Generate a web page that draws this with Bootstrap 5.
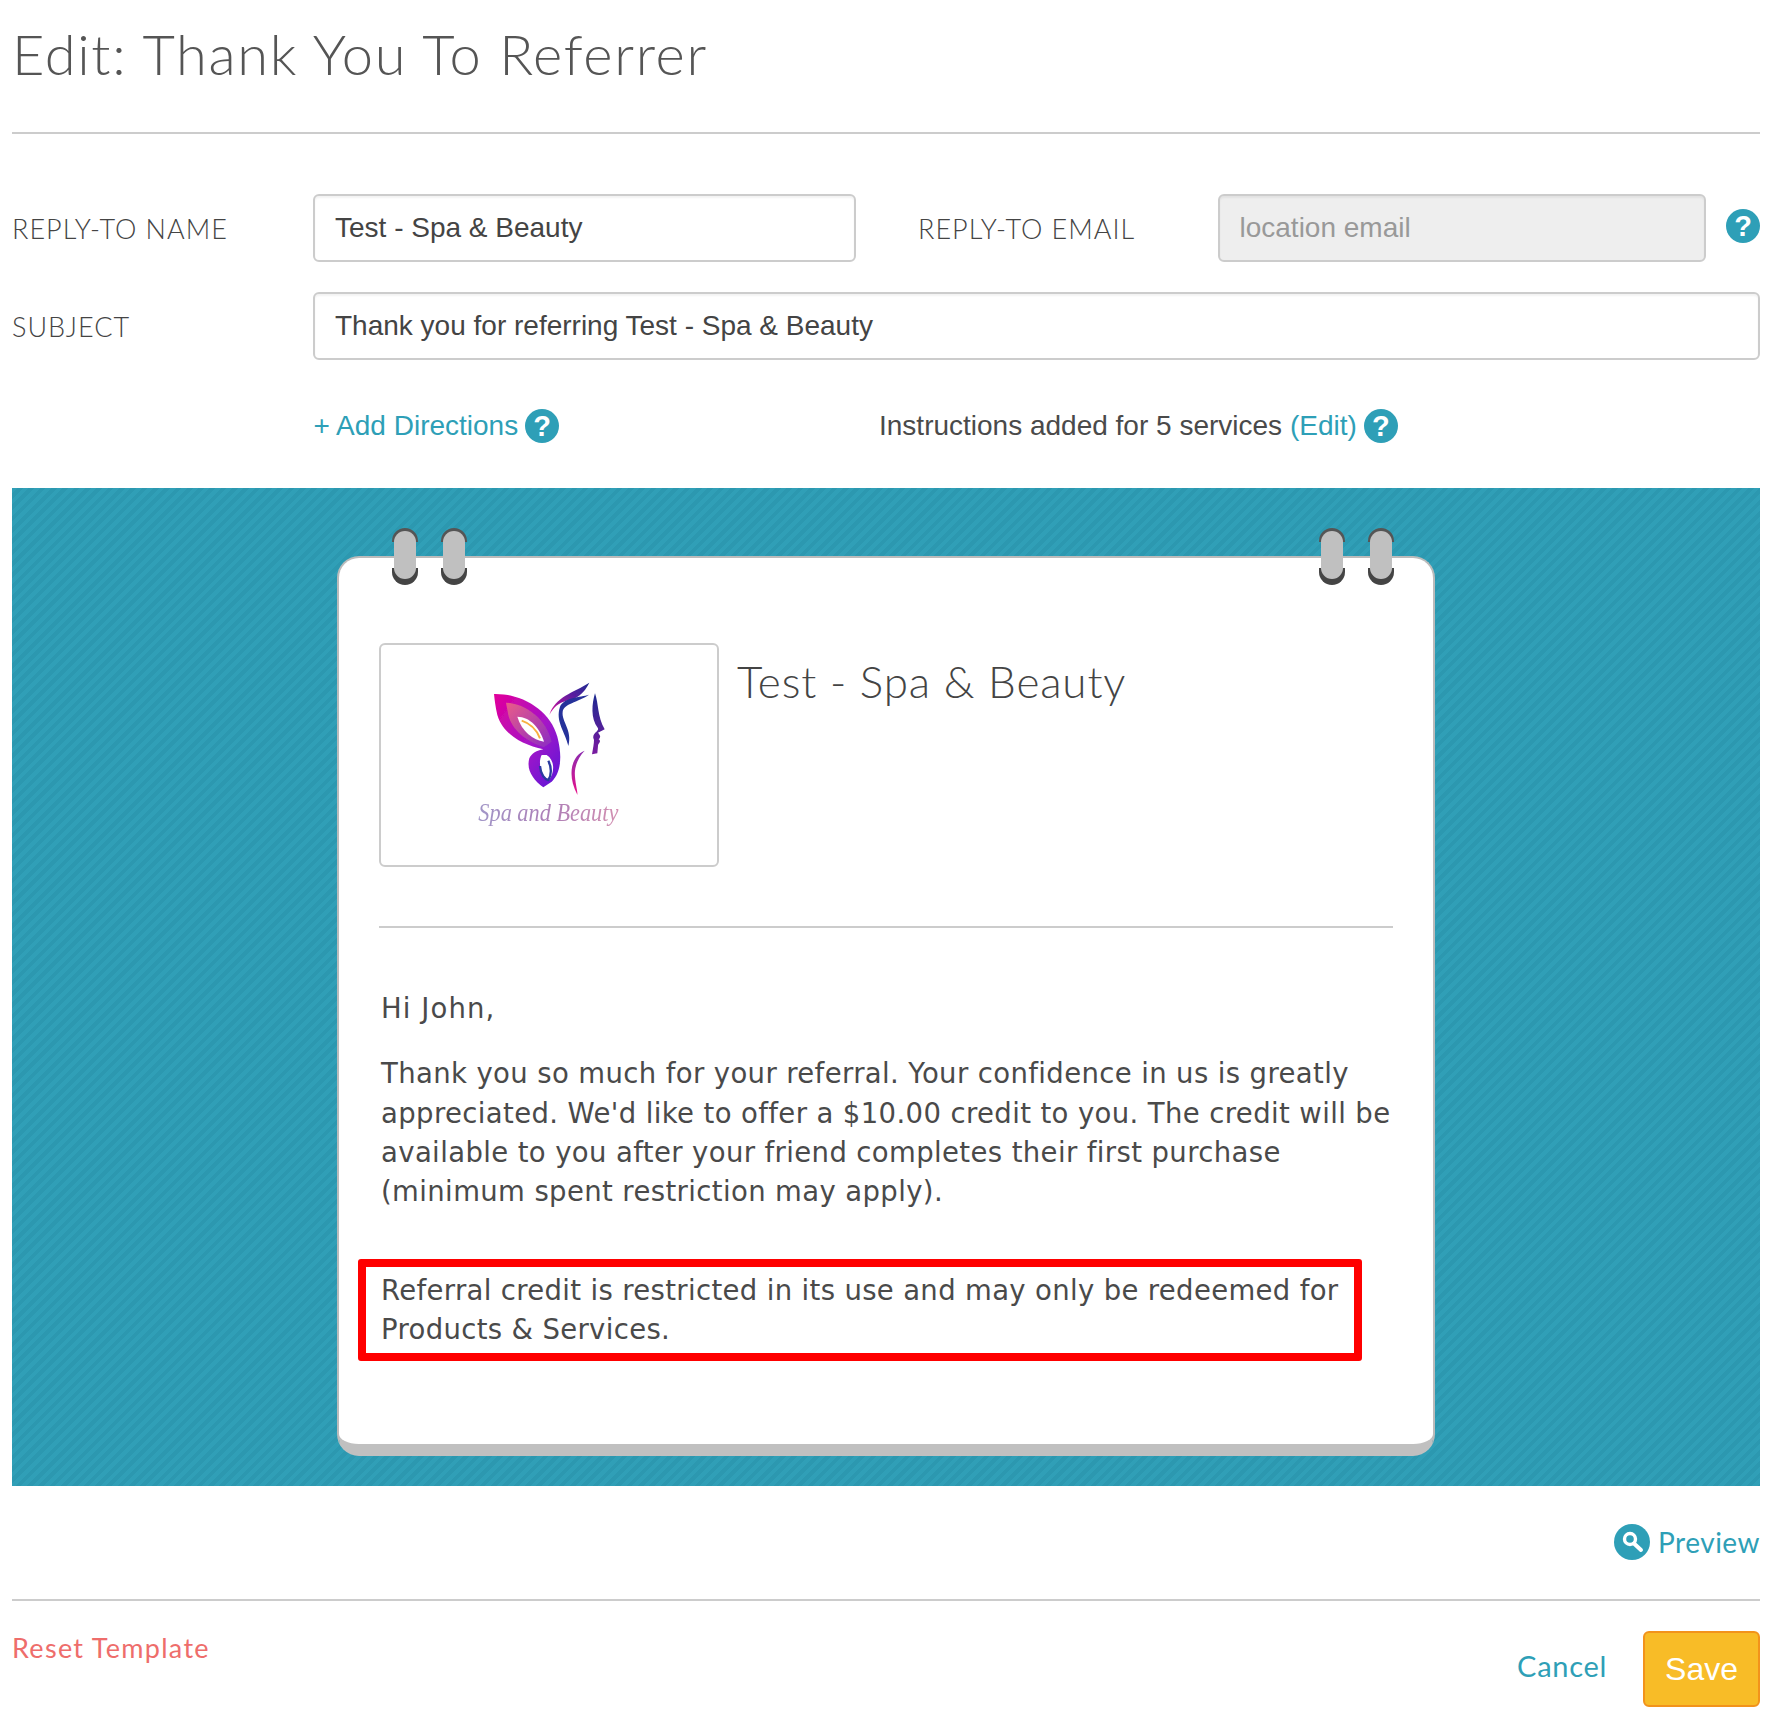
<!doctype html>
<html lang="en">
<head>
<meta charset="utf-8">
<title>Edit: Thank You To Referrer</title>
<link href="https://cdn.jsdelivr.net/npm/bootstrap@5.3.0/dist/css/bootstrap.min.css" rel="stylesheet">
<style>
body{background:#fff;color:#4a4a4a;font-family:"Liberation Sans",Arial,sans-serif;padding:0 16px 0 12px;height:1716px;overflow:hidden}
.page-title{font-family:Lato,sans-serif;font-weight:300;font-size:56px;line-height:68px;letter-spacing:1.65px;color:#555;margin:0;padding-top:20px;height:132px}
.rule-line{border:0;border-top:2px solid #ccc;opacity:1;margin:0}
.field-label{font-family:Lato,sans-serif;font-weight:300;font-size:27px;line-height:34px;letter-spacing:1px;color:#444;text-transform:uppercase;padding-top:1.5px}
.label-main{width:301px;flex:none}
.label-second{width:299.5px;flex:none;margin-left:62px}
.form-control.field-input{height:68px;border:2px solid #ccc;border-radius:6px;font-size:28px;color:#444;padding:0 20px;box-shadow:inset 0 2px 2px rgba(0,0,0,.05);background:#fff}
.form-control.field-input:disabled{background:#eee}
.form-control.field-input::placeholder{color:#999;opacity:1}
.input-name{width:543px;flex:none}
.input-mail{width:488px;flex:none}
.input-subject{width:1447px;flex:none}
.first-row{margin-top:60px}
.second-row{margin-top:30px}
.dir-row{margin-top:49px;margin-left:301.5px;height:34px;font-size:28px;line-height:34px}
.dir-add{width:565.5px;flex:none}
.dir-gap{gap:7px}
.teal-link{color:#2e9fb7;text-decoration:none}
.help-dot{width:34px;height:34px;border-radius:50%;background:#2e9fb7;color:#fff;font-weight:700;font-size:29px;line-height:34px;text-align:center;flex:none;display:inline-block}
.stripe-panel{margin-top:45px;height:998px;padding:68px 0 0 325px;background:repeating-linear-gradient(135deg,#309fb7 0 4px,#2c98b0 4px 8px)}
.note-sheet{position:relative;width:1098px;height:900px;background:#fff;border:2px solid #bbb;border-bottom:12px solid #c0c0c0;border-radius:22px;padding:85px 40px 0}
.ring-clip{position:absolute;top:-30px;width:26px;height:57px;border-radius:13px;background:linear-gradient(#555 0 14px,transparent 14px 40px,#444 40px)}
.ring-clip::before{content:"";position:absolute;left:2px;right:2px;top:3px;bottom:6px;background:#c0c0c0;border-radius:11px}
.ring-a{left:53px}.ring-b{left:102px}.ring-c{left:980px}.ring-d{left:1029px}
.logo-box{width:340px;height:224px;border:2px solid #ccc;border-radius:6px;flex:none}
.logo-box svg{display:block}
.sheet-name{font-family:Lato,sans-serif;font-weight:300;font-size:44px;line-height:60px;letter-spacing:.85px;color:#444;margin:8px 0 0 18px}
.sheet-rule{margin-top:59px;width:1014px}
.mail-copy{font-family:"DejaVu Sans",Verdana,sans-serif;font-size:27.5px;line-height:39.3px;letter-spacing:.38px;color:#4a4a4a;padding-left:2px}
.mail-copy p{margin:0}
.mail-copy .greeting{margin-top:61px;letter-spacing:1.1px}
.mail-copy .mail-main{margin-top:26px;width:1020px}
.mail-copy .red-note{margin:48px 0 0 -23px;width:1004px;height:102px;border:8px solid #f00;border-radius:3px;padding:4px 0 0 15px;line-height:39px;letter-spacing:.34px}
.preview-row{height:36px;margin-top:38px}
.preview-link{font-family:Lato,sans-serif;font-size:28px;line-height:38px;letter-spacing:.5px;color:#2e9fb7;text-decoration:none}
.bottom-rule{margin-top:39px}
.reset-link{font-family:Lato,sans-serif;font-size:27px;line-height:34px;letter-spacing:1.3px;color:#ee6d6b;text-decoration:none;margin-top:30px}
.cancel-link{font-family:Lato,sans-serif;font-size:29px;letter-spacing:.7px;color:#2e9fb7;text-decoration:none;margin-right:36px;margin-top:43px}
.btn.save-btn{width:117px;height:76px;background:#f8bc27;border:2px solid #f2931b;border-radius:6px;color:#fff;font-size:32px;padding:0;margin-top:30px}
</style>
</head>
<body>
<h1 class="page-title">Edit: Thank You To Referrer</h1>
<hr class="rule-line">

<div class="d-flex align-items-center first-row">
  <label class="field-label label-main">Reply-to name</label>
  <input class="form-control field-input input-name" value="Test - Spa &amp; Beauty">
  <label class="field-label label-second">Reply-to email</label>
  <input class="form-control field-input input-mail" placeholder="location email" disabled>
  <span class="help-dot ms-auto mb-1">?</span>
</div>
<div class="d-flex align-items-center second-row">
  <label class="field-label label-main">Subject</label>
  <input class="form-control field-input input-subject" value="Thank you for referring Test - Spa &amp; Beauty">
</div>
<div class="d-flex align-items-center dir-row">
  <div class="dir-add d-flex align-items-center dir-gap"><a class="teal-link" href="#">+ Add Directions</a><span class="help-dot">?</span></div>
  <div class="d-flex align-items-center dir-gap"><span>Instructions added for 5 services <a class="teal-link" href="#">(Edit)</a></span><span class="help-dot">?</span></div>
</div>

<div class="stripe-panel">
  <div class="note-sheet">
    <span class="ring-clip ring-a"></span><span class="ring-clip ring-b"></span><span class="ring-clip ring-c"></span><span class="ring-clip ring-d"></span>
    <div class="d-flex">
      <div class="logo-box">
        <svg width="336" height="220" viewBox="-177 -45 1008 660" aria-label="Spa and Beauty logo">
          <defs>
            <linearGradient id="wingG" x1="0" y1="0" x2="1" y2="1"><stop offset="0" stop-color="#e2009a"/><stop offset=".55" stop-color="#a414c8"/><stop offset="1" stop-color="#5a14d8"/></linearGradient>
            <linearGradient id="pinkG" x1="0" y1="0" x2="1" y2="1"><stop offset="0" stop-color="#ea5c88"/><stop offset="1" stop-color="#8a2cc4"/></linearGradient>
            <linearGradient id="hairG" x1="0" y1="1" x2="1" y2="0"><stop offset="0" stop-color="#d8109c"/><stop offset=".6" stop-color="#5a1ea0"/><stop offset="1" stop-color="#1c2a90"/></linearGradient>
            <linearGradient id="faceG" x1="0" y1="0" x2="0" y2="1"><stop offset="0" stop-color="#1c2a90"/><stop offset="1" stop-color="#7a1aa0"/></linearGradient>
            <linearGradient id="neckG" x1="0" y1="0" x2="0" y2="1"><stop offset="0" stop-color="#8a2cb0"/><stop offset="1" stop-color="#e8108a"/></linearGradient>
            <linearGradient id="wordG" x1="0" y1="0" x2="1" y2="0"><stop offset="0" stop-color="#7a6ab0"/><stop offset=".5" stop-color="#8a4a9a"/><stop offset="1" stop-color="#c06090"/></linearGradient>
            <filter id="softF"><feGaussianBlur stdDeviation="1.8"/></filter>
          </defs>
          <g filter="url(#softF)">
            <path fill="url(#wingG)" d="M162 102C245 100 330 150 352 230C368 290 362 340 335 365L310 382C280 360 258 330 268 295C275 280 290 272 310 268C250 255 190 225 172 165C166 140 164 120 162 102Z"/>
            <path fill="url(#pinkG)" d="M198 128C260 130 320 180 335 245L312 262C260 245 215 210 205 165Z"/>
            <path fill="#fff" d="M232 170C270 170 300 205 312 245C280 240 245 215 232 170Z"/>
            <path fill="none" stroke="#f8b040" stroke-width="6" d="M245 182C270 190 290 210 300 235"/>
            <path fill="#fff" d="M305 285C292 310 305 350 325 362C345 340 345 300 320 285Z"/>
            <path fill="none" stroke="#2a3aa0" stroke-width="7" d="M300 318C302 345 315 358 325 360C335 345 335 322 325 302"/>
            <path fill="url(#hairG)" d="M328 165C345 110 400 98 448 68C432 100 410 118 380 122C355 128 340 142 328 165Z"/>
            <path fill="#25309a" d="M447 104C412 128 372 130 368 155C364 185 398 210 385 258C376 215 345 185 360 140C372 112 420 112 447 104Z"/>
            <path fill="url(#faceG)" d="M465 100C476 130 472 170 494 208L474 218C480 225 484 230 476 238C486 245 474 250 474 258L472 280L456 283C459 265 462 250 462 240C452 220 478 215 474 205C451 175 456 130 465 100Z"/>
            <path fill="url(#neckG)" d="M434 272C398 285 378 340 412 404C414 396 400 350 406 325C410 305 420 285 434 272Z"/>
            <text x="115" y="482" textLength="420" lengthAdjust="spacingAndGlyphs" font-family="Liberation Serif,serif" font-style="italic" font-size="78" fill="url(#wordG)" opacity=".7">Spa and Beauty</text>
          </g>
        </svg>
      </div>
      <h2 class="sheet-name">Test - Spa &amp; Beauty</h2>
    </div>
    <hr class="rule-line sheet-rule">
    <div class="mail-copy">
      <p class="greeting">Hi John,</p>
      <p class="mail-main">Thank you so much for your referral. Your confidence in us is greatly appreciated. We'd like to offer a $10.00 credit to you. The credit will be available to you after your friend completes their first purchase (minimum spent restriction may apply).</p>
      <p class="red-note">Referral credit is restricted in its use and may only be redeemed for Products &amp; Services.</p>
    </div>
  </div>
</div>

<div class="d-flex justify-content-end preview-row">
  <a class="preview-link d-flex align-items-center gap-2" href="#">
    <svg width="36" height="36" viewBox="0 0 36 36"><circle cx="18" cy="18" r="18" fill="#2e9fb7"/><circle cx="16" cy="15" r="5.5" fill="none" stroke="#fff" stroke-width="3.4"/><path d="M20 19.5l7 6.5" stroke="#fff" stroke-width="4" stroke-linecap="round"/></svg>
    Preview
  </a>
</div>
<hr class="rule-line bottom-rule">
<div class="d-flex align-items-start">
  <a class="reset-link" href="#">Reset Template</a>
  <div class="ms-auto d-flex align-items-start">
    <a class="cancel-link" href="#">Cancel</a>
    <button class="btn save-btn" type="button">Save</button>
  </div>
</div>
<script src="https://cdn.jsdelivr.net/npm/bootstrap@5.3.0/dist/js/bootstrap.bundle.min.js"></script>
</body>
</html>
